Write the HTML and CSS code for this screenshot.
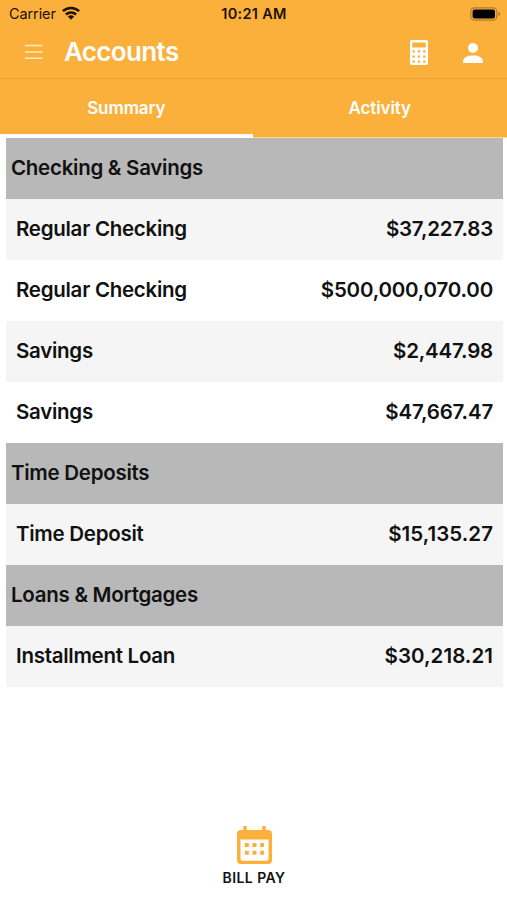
FILE: index.html
```html
<!DOCTYPE html>
<html lang="en">
<head>
<meta charset="utf-8">
<title>Accounts</title>
<link rel="stylesheet" href="styles.css">
</head>
<body>
<div class="app">
  <header class="top">
    <div class="status">
      <div class="carrier"><span class="carrier-name">Carrier</span>
        <svg class="wifi" width="18" height="14" viewBox="0 0 18 14"><g fill="none" stroke="#1c1205" stroke-width="2.5"><path d="M.9 5.2a11.6 11.6 0 0 1 16.2 0"/><path d="M3.9 8.5a7.3 7.3 0 0 1 10.2 0"/></g><path d="M5.9 10.5a4.4 4.4 0 0 1 6.2 0L9 13.7z" fill="#1c1205"/></svg>
      </div>
      <span class="time">10:21 AM</span>
      <svg class="battery" width="31" height="14" viewBox="0 0 31 14"><rect x=".8" y=".8" width="26" height="12.4" rx="3.6" fill="none" stroke="#b47c28" stroke-width="1.2"/><rect x="2.6" y="2.6" width="22.4" height="8.8" rx="2" fill="#000"/><path d="M28.4 4.8q2 .8 2 2.2t-2 2.2z" fill="#b47c28"/></svg>
    </div>
    <div class="bar">
      <svg class="menu" width="18" height="16" viewBox="0 0 18 16"><path d="M0 1.6h17.5M0 8h17.5M0 14.2h17.5" stroke="#ffe9c4" stroke-width="1.5"/></svg>
      <h1 class="title">Accounts</h1>
      <svg class="calc" width="18" height="25" viewBox="0 0 18 25"><path fill="#fff" fill-rule="evenodd" d="M2 0h14a2 2 0 0 1 2 2v21a2 2 0 0 1-2 2H2a2 2 0 0 1-2-2V2a2 2 0 0 1 2-2zM2.3 2.5v5h13.4v-5zM2.5 10.2v2.3h2.3v-2.3zM7.8 10.2v2.3h2.3v-2.3zM13.2 10.2v2.3h2.3v-2.3zM2.5 15.4v2.3h2.3v-2.3zM7.8 15.4v2.3h2.3v-2.3zM13.2 15.4v2.3h2.3v-2.3zM2.5 20.5v2.3h2.3v-2.3zM7.8 20.5v2.3h2.3v-2.3zM13.2 20.5v2.3h2.3v-2.3z"/></svg>
      <svg class="person" width="20" height="20" viewBox="0 0 20 20"><circle cx="10" cy="5" r="5" fill="#fff"/><path d="M0 20v-1.6C0 14.6 5 12.6 10 12.6s10 2 10 5.8V20z" fill="#fff"/></svg>
    </div>
    <nav class="tabs">
      <a class="tab active">Summary</a>
      <a class="tab">Activity</a>
    </nav>
  </header>
  <main class="list">
    <h2 class="group">Checking &amp; Savings</h2>
    <div class="row shade"><span>Regular Checking</span><span class="amount">$37,227.83</span></div>
    <div class="row"><span>Regular Checking</span><span class="amount">$500,000,070.00</span></div>
    <div class="row shade"><span>Savings</span><span class="amount">$2,447.98</span></div>
    <div class="row"><span>Savings</span><span class="amount">$47,667.47</span></div>
    <h2 class="group">Time Deposits</h2>
    <div class="row shade"><span>Time Deposit</span><span class="amount loose">$15,135.27</span></div>
    <h2 class="group">Loans &amp; Mortgages</h2>
    <div class="row shade"><span>Installment Loan</span><span class="amount loose">$30,218.21</span></div>
  </main>
  <footer class="foot">
    <svg width="35" height="39" viewBox="0 0 35 39"><path fill="#fbb03b" fill-rule="evenodd" d="M6.3 0h3.4v4h15.6V0h3.4v4H31a4 4 0 0 1 4 4v26a4 4 0 0 1-4 4H4a4 4 0 0 1-4-4V8a4 4 0 0 1 4-4h2.3zM3.5 13.5v19.5a1.8 1.8 0 0 0 1.8 1.8h24.4a1.8 1.8 0 0 0 1.8-1.8V13.5z"/><path fill="#fbb03b" d="M7.8 17h4v4h-4zM15.5 17h4v4h-4zM23.2 17h4v4h-4zM7.8 24.7h4v4h-4zM15.5 24.7h4v4h-4zM23.2 24.7h4v4h-4z"/></svg>
    <span class="pay">BILL PAY</span>
  </footer>
</div>
</body>
</html>
```

FILE: styles.css
```css
* { box-sizing: border-box; }
body { margin: 0; background: #fff; font-family: Inter, "Liberation Sans", sans-serif; color: #111; }
.app { width: 507px; height: 900px; display: flex; flex-direction: column; overflow: hidden; }
.top { height: 138px; flex: none; background: linear-gradient(#fbb03b, #fbb03b) 0 0 / 100% 137.5px no-repeat; color: #fff; }
.status { height: 27px; display: grid; grid-template-columns: 1fr auto 1fr; align-items: center; padding: 0 6px 0 9px; color: #1c1205; font-size: 14.5px; line-height: 20px; }
.carrier { display: flex; align-items: center; gap: 6px; letter-spacing: -0.1px; }
.wifi { margin-top: -2px; }
.time { margin-left: -2px; font-weight: 600; letter-spacing: 0.3px; }
.battery { justify-self: end; }
.bar { height: 52px; display: flex; align-items: center; padding: 0 24px 0 25px; border-bottom: 1px solid #e9a136; }
.menu { margin-top: -1px; }
.title { margin: -2px 0 0 21px; font-size: 26px; line-height: 32px; font-weight: 600; letter-spacing: -0.65px; flex: 1; }
.calc { margin-right: 35px; }
.tabs { height: 59px; display: flex; }
.tab { flex: 1; display: flex; align-items: center; justify-content: center; font-size: 17px; font-weight: 600; letter-spacing: -0.1px; line-height: 22px; padding: 0 1px 1px 0; }
.tab.active { background: linear-gradient(#fff, #fff) 0 100% / 253px 4px no-repeat; }
.list { padding: 0 4px 0 6px; display: grid; grid-auto-rows: 61.05px; font-size: 20.5px; font-weight: 600; letter-spacing: -0.27px; }
.group { margin: 0; padding: 0 5px; background: #b8b8b8; font-size: inherit; font-weight: inherit; line-height: 60px; }
.row { display: flex; justify-content: space-between; padding: 0 10px 0 10px; line-height: 60px; }
.amount { letter-spacing: -0.2px; }
.loose { letter-spacing: 0.05px; }
.shade { background: #f5f5f5; }
.foot { margin-top: auto; height: 74px; padding-left: 1px; display: flex; flex-direction: column; align-items: center; }
.pay { margin-top: 4px; font-size: 14px; line-height: 18px; font-weight: 600; letter-spacing: 0.45px; }
```
